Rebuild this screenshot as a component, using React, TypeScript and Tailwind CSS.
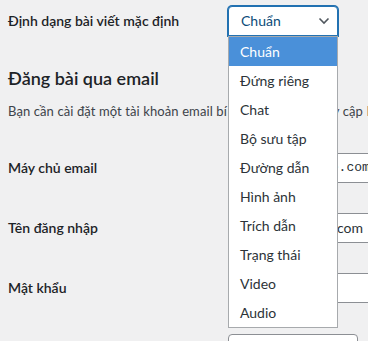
const formats = [
  'Chuẩn',
  'Đứng riêng',
  'Chat',
  'Bộ sưu tập',
  'Đường dẫn',
  'Hình ảnh',
  'Trích dẫn',
  'Trạng thái',
  'Video',
  'Audio',
];

function FieldRow({ label, children }: { label: string; children: React.ReactNode }) {
  return (
    <div className="flex h-[60px] items-center">
      <div className="w-[220px] shrink-0 text-sm font-semibold">{label}</div>
      {children}
    </div>
  );
}

export default function App() {
  return (
    <div className="relative h-[341px] w-[368px] overflow-hidden bg-[#f0f0f1] pl-2 font-['Lato',sans-serif] text-[#1d2327]">
      <div className="flex h-[42px] items-start pt-[6px]">
        <div className="flex h-[30px] w-[220px] shrink-0 items-center text-sm font-semibold">
          Định dạng bài viết mặc định
        </div>
        <div className="flex h-[30px] w-[110px] shrink-0 items-center justify-between rounded-t-[4px] border border-[#2271b1] bg-white pl-[12px] pr-[7px] text-sm text-[#0a4b78] shadow-[0_0_0_1px_#2271b1]">
          <span>Chuẩn</span>
          <svg width="12" height="8" viewBox="0 0 12 8" fill="none">
            <path d="M1.5 1.5 6 6l4.5-4.5" stroke="#50575e" strokeWidth="1.6" />
          </svg>
        </div>
      </div>

      <h2 className="mt-[23px] h-[26px] text-[18px] leading-[26px] font-semibold">Đăng bài qua email</h2>
      <p className="mt-[10px] h-[20px] whitespace-nowrap text-[13px] leading-[20px] tracking-[0.1px] text-[#3c434a]">
        Bạn cần cài đặt một tài khoản email bí mật với quyền truy cập POP3.
      </p>

      <div className="mt-[17px]">
        <FieldRow label="Máy chủ email">
          <div className="flex h-[30px] w-[240px] shrink-0 items-center rounded-[4px] border border-[#8c8f94] bg-white pl-[16px] font-['Liberation_Mono',monospace] text-[13px] text-[#2c3338]">
            mail.example.com
          </div>
        </FieldRow>
        <FieldRow label="Tên đăng nhập">
          <div className="flex h-[30px] w-[240px] shrink-0 items-center rounded-[4px] border border-[#8c8f94] bg-white pl-[12px] text-sm text-[#2c3338]">
            login@example.com
          </div>
        </FieldRow>
        <FieldRow label="Mật khẩu">
          <div className="h-[30px] w-[240px] shrink-0 rounded-[4px] border border-[#8c8f94] bg-white" />
        </FieldRow>
        <div className="mt-[16px] flex">
          <div className="w-[220px] shrink-0" />
          <div className="h-[30px] w-[130px] shrink-0 rounded-[4px] border border-[#8c8f94] bg-white" />
        </div>
      </div>

      <ul className="absolute left-[228px] top-[36px] w-[110px] border border-[#a7aaad] bg-white text-sm text-[#2c3338]">
        {formats.map((f, i) => (
          <li
            key={f}
            className={
              i === 0
                ? 'flex h-[29px] items-center bg-[#4a90d9] pl-[11px] text-white'
                : 'flex h-[29px] items-center pl-[11px]'
            }
          >
            {f}
          </li>
        ))}
      </ul>
    </div>
  );
}
